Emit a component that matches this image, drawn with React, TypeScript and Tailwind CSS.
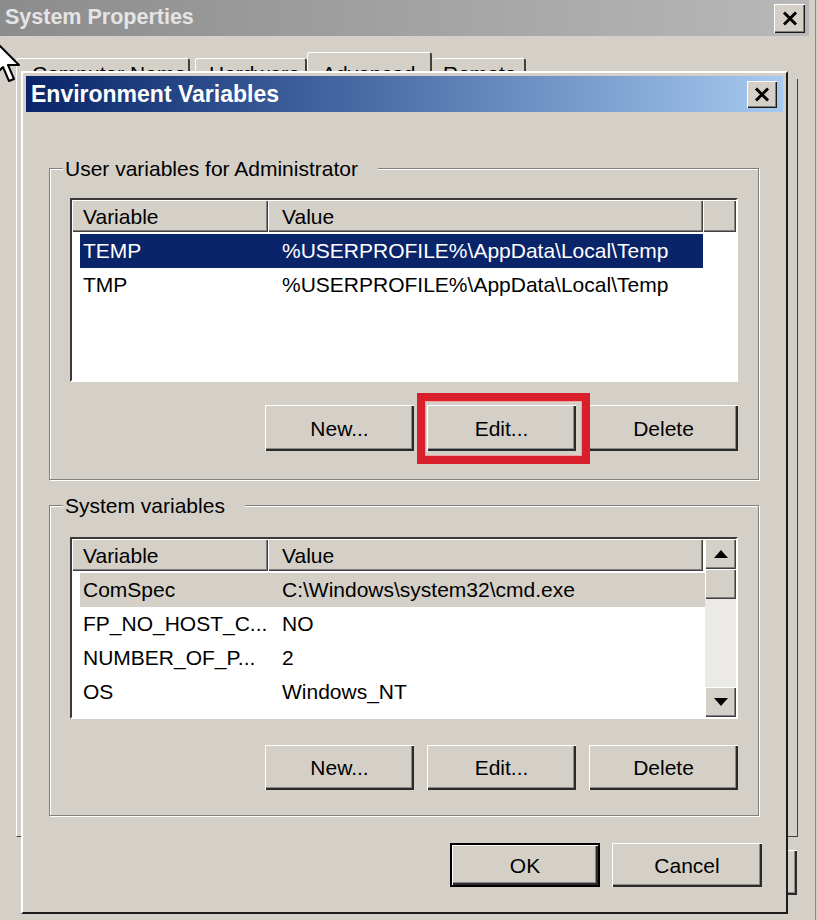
import React from "react";

const FONT = "font-['Liberation_Sans',Arial,sans-serif]";

function CloseGlyph() {
  return (
    <svg width="16" height="15" viewBox="0 0 16 15">
      <path d="M2 1.5 L14 13.5 M14 1.5 L2 13.5" stroke="#000" strokeWidth="3" />
    </svg>
  );
}

function CloseBtn({ className }: { className: string }) {
  return (
    <div
      className={`flex items-center justify-center bg-[#d4d0c8] shadow-[inset_1px_1px_0_#fff,inset_-1px_-1px_0_#1a1a1a,inset_-2px_-2px_0_#808080] ${className}`}
    >
      <CloseGlyph />
    </div>
  );
}

function Btn({ label, className }: { label?: string; className: string }) {
  return (
    <div
      className={`flex items-center justify-center bg-[#d4d0c8] text-[21px] leading-none text-black shadow-[inset_1px_1px_0_#fff,inset_-2px_-2px_0_#2a2a2a,inset_-3px_-3px_0_#8a8a8a] ${className}`}
    >
      {label}
    </div>
  );
}

function Group({
  label,
  className,
  children,
}: {
  label: string;
  className: string;
  children: React.ReactNode;
}) {
  return (
    <div
      className={`relative border border-[#808080] shadow-[1px_1px_0_#fff,inset_1px_1px_0_#fff] ${className}`}
    >
      <span className="absolute -top-[12px] left-[13px] bg-[#d4d0c8] pl-[2px] pr-[20px] text-[21px] leading-[24px] whitespace-nowrap">
        {label}
      </span>
      {children}
    </div>
  );
}

const headCell =
  "h-full flex items-center bg-[#d4d0c8] text-[21px] leading-none shadow-[inset_1px_1px_0_#fff,inset_-1px_-1px_0_#404040,inset_-2px_-2px_0_#808080]";

function Row({
  name,
  value,
  bg,
}: {
  name: string;
  value: string;
  bg: "sel" | "gray" | "none";
}) {
  const tone =
    bg === "sel"
      ? "bg-[#0a246a] text-white"
      : bg === "gray"
      ? "bg-[#d4d0c8] text-black"
      : "text-black";
  return (
    <div className="h-[34px] shrink-0 flex pl-[8px] min-w-0 overflow-hidden">
      <div className={`flex-1 min-w-0 flex items-center text-[21px] leading-[28px] whitespace-nowrap ${tone}`}>
        <div className="w-[188px] shrink-0 pl-[3px] overflow-hidden">{name}</div>
        <div className="pl-[14px] overflow-hidden">{value}</div>
      </div>
    </div>
  );
}

function Arrow({ up }: { up: boolean }) {
  return (
    <div className="h-[30px] shrink-0 flex items-center justify-center bg-[#d4d0c8] shadow-[inset_1px_1px_0_#fff,inset_-1px_-1px_0_#404040,inset_-2px_-2px_0_#808080]">
      <svg width="14" height="8" viewBox="0 0 14 8">
        {up ? <path d="M7 0 L14 8 L0 8 Z" fill="#000" /> : <path d="M0 0 L14 0 L7 8 Z" fill="#000" />}
      </svg>
    </div>
  );
}

const listBox =
  "bg-white border-2 border-t-[#3a3a3a] border-l-[#3a3a3a] border-r-white border-b-white overflow-hidden";

export default function App() {
  return (
    <div className={`relative w-[818px] h-[920px] overflow-hidden bg-[#d4d0c8] text-black ${FONT}`}>
      {/* System Properties (background window) */}
      <div className="w-[816px] h-full flex flex-col border-r border-r-[#8a8a8a]">
        <div className="h-[36px] mr-[6px] shrink-0 flex items-center justify-between bg-linear-to-r from-[#8c8c8c] to-[#b8b8b8] pl-[5px] pr-[4px]">
          <span className="text-[21.5px] font-bold text-[#e4e4e4] leading-none">System Properties</span>
          <CloseBtn className="w-[31px] h-[29px]" />
        </div>
        <div className="h-[43px] shrink-0 flex items-end pl-[16px] text-[21px] leading-[24px]">
          <div className="w-[174px] h-[21px] pt-[3px] pl-[15px] overflow-hidden whitespace-nowrap border-t border-l border-r-2 border-t-white border-l-white border-r-[#404040] rounded-t-[3px]">
            Computer Name
          </div>
          <div className="ml-[5px] w-[112px] h-[21px] pt-[3px] pl-[13px] overflow-hidden whitespace-nowrap border-t border-l border-r-2 border-t-white border-l-white border-r-[#404040] rounded-t-[3px]">
            Hardware
          </div>
          <div className="w-[125px] h-[27px] pt-[9px] pl-[14px] overflow-hidden whitespace-nowrap border-t border-l border-r-2 border-t-white border-l-white border-r-[#404040] rounded-t-[3px]">
            Advanced
          </div>
          <div className="w-[94px] h-[21px] pt-[3px] pl-[11px] overflow-hidden whitespace-nowrap border-t border-r-2 border-t-white border-r-[#404040] rounded-t-[3px]">
            Remote
          </div>
        </div>
        <div className="ml-[16px] w-[782px] h-[758px] shrink-0 border-l border-r border-b border-l-white border-r-[#404040] border-b-[#404040] shadow-[inset_-9px_0_0_#d4d0c8,inset_-10px_0_0_#fff]" />
        <div className="mt-[13px] flex justify-end gap-[12px] pr-[18px]">
          <Btn className="w-[148px] h-[45px]" />
          <Btn className="w-[148px] h-[45px]" />
          <Btn className="w-[148px] h-[45px]" />
        </div>
      </div>

      {/* Environment Variables dialog */}
      <div className="absolute left-[21px] top-[71px] w-[767px] h-[843px] flex flex-col bg-[#d4d0c8] border-2 border-t-white border-l-white border-r-[#1c1c1c] border-b-[#1c1c1c] p-[3px]">
        <div className="h-[36px] shrink-0 flex items-center justify-between bg-linear-to-r from-[#0a246a] to-[#a6caf0] pl-[5px] pr-[6px]">
          <span className="text-[23px] font-bold text-white leading-none">Environment Variables</span>
          <CloseBtn className="w-[30px] h-[27px]" />
        </div>

        <Group label="User variables for Administrator" className="mt-[56px] ml-[23px] w-[710px] h-[312px] pt-[29px] px-[20px]">
          <div className={`h-[184px] flex flex-col ${listBox}`}>
            <div className="h-[32px] shrink-0 flex">
              <div className={`w-[196px] pl-[11px] ${headCell}`}>Variable</div>
              <div className={`w-[435px] pl-[14px] ${headCell}`}>Value</div>
              <div className={`flex-1 ${headCell}`} />
            </div>
            <div className="h-[2px] shrink-0" />
            <div className="w-[631px] flex flex-col">
              <Row name="TEMP" value="%USERPROFILE%\AppData\Local\Temp" bg="sel" />
              <Row name="TMP" value="%USERPROFILE%\AppData\Local\Temp" bg="none" />
            </div>
          </div>
          <div className="mt-[23px] flex justify-end gap-[13px]">
            <Btn label="New..." className="w-[149px] h-[46px]" />
            <div className="relative">
              <Btn label="Edit..." className="w-[149px] h-[46px]" />
              <div className="absolute -left-[10px] -top-[12px] -right-[14px] -bottom-[13px] border-[8px] border-[#d91f2b] shadow-[inset_0_0_0_1px_#f0a0a0]" />
            </div>
            <Btn label="Delete" className="w-[149px] h-[46px]" />
          </div>
        </Group>

        <Group label="System variables" className="mt-[25px] ml-[23px] w-[710px] h-[311px] pt-[31px] px-[20px]">
          <div className={`h-[182px] flex ${listBox}`}>
            <div className="flex-1 min-w-0 flex flex-col overflow-hidden">
              <div className="h-[32px] shrink-0 flex">
                <div className={`w-[196px] shrink-0 pl-[11px] ${headCell}`}>Variable</div>
                <div className={`w-[435px] shrink-0 pl-[14px] ${headCell}`}>Value</div>
              </div>
              <div className="h-[2px] shrink-0" />
              <Row name="ComSpec" value="C:\Windows\system32\cmd.exe" bg="gray" />
              <Row name="FP_NO_HOST_C..." value="NO" bg="none" />
              <Row name="NUMBER_OF_P..." value="2" bg="none" />
              <Row name="OS" value="Windows_NT" bg="none" />
              <Row name="Path" value="C:\Windows\system32;C:\Windows;C:\Windows\System32\Wbem" bg="none" />
            </div>
            <div className="w-[31px] shrink-0 flex flex-col">
              <Arrow up />
              <div className="h-[30px] shrink-0 bg-[#d4d0c8] shadow-[inset_1px_1px_0_#fff,inset_-1px_-1px_0_#404040,inset_-2px_-2px_0_#808080]" />
              <div className="flex-1 bg-[#eceae6]" />
              <Arrow up={false} />
            </div>
          </div>
          <div className="mt-[26px] flex justify-end gap-[13px]">
            <Btn label="New..." className="w-[149px] h-[45px]" />
            <Btn label="Edit..." className="w-[149px] h-[45px]" />
            <Btn label="Delete" className="w-[149px] h-[45px]" />
          </div>
        </Group>

        <div className="mt-[27px] flex justify-end gap-[12px] pr-[21px]">
          <div className="w-[150px] h-[44px] border-2 border-black flex">
            <Btn label="OK" className="flex-1" />
          </div>
          <Btn label="Cancel" className="w-[150px] h-[44px]" />
        </div>
      </div>

      {/* mouse pointer */}
      <svg className="absolute left-[-6px] top-[40px]" width="30" height="48" viewBox="0 0 30 48">
        <path d="M1 1 L1 35 L9 27 L15 41 L20 39 L14 25 L25 25 Z" fill="#fff" stroke="#000" strokeWidth="2" strokeLinejoin="round" />
      </svg>
    </div>
  );
}
